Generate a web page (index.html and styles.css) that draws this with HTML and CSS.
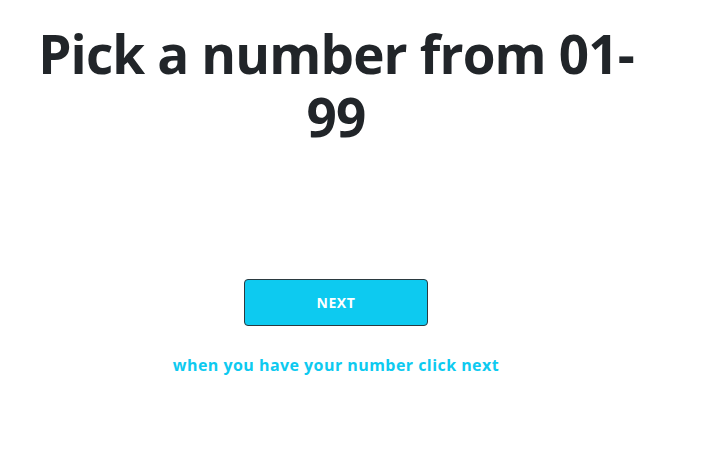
FILE: index.html
```html
<!DOCTYPE html>
<html>
<head>
<meta charset="utf-8">
<link rel="stylesheet" href="styles.css">
</head>
<body>
<div class="page">
  <h1 class="title">Pick a number from 01-99</h1>
  <div class="actions">
    <button class="next-btn">NEXT</button>
    <p class="hint">when you have your number click next</p>
  </div>
</div>
</body>
</html>
```

FILE: styles.css
```css
html, body {
  margin: 0;
  padding: 0;
  background: #fff;
}
.page {
  width: 672px;
  display: flex;
  flex-direction: column;
  align-items: center;
  font-family: "Open Sans", "Noto Sans", sans-serif;
}
.title {
  width: 620px;
  margin: 22px 0 0 0;
  font-size: 53px;
  line-height: 63px;
  font-weight: 700;
  letter-spacing: -0.85px;
  color: #212529;
  text-align: center;
}
.actions {
  margin-top: 131px;
  display: flex;
  flex-direction: column;
  align-items: center;
}
.next-btn {
  width: 184px;
  height: 47px;
  background: #0dcaf0;
  border: 1px solid #2b3a40;
  border-radius: 4px;
  color: #fff;
  font-family: "Open Sans", sans-serif;
  font-weight: 700;
  font-size: 14px;
  letter-spacing: 0.6px;
  padding: 0;
}
.hint {
  margin: 28px 0 0 0;
  color: #0dcaf0;
  font-weight: 700;
  font-size: 16px;
  letter-spacing: 0.45px;
}
```
